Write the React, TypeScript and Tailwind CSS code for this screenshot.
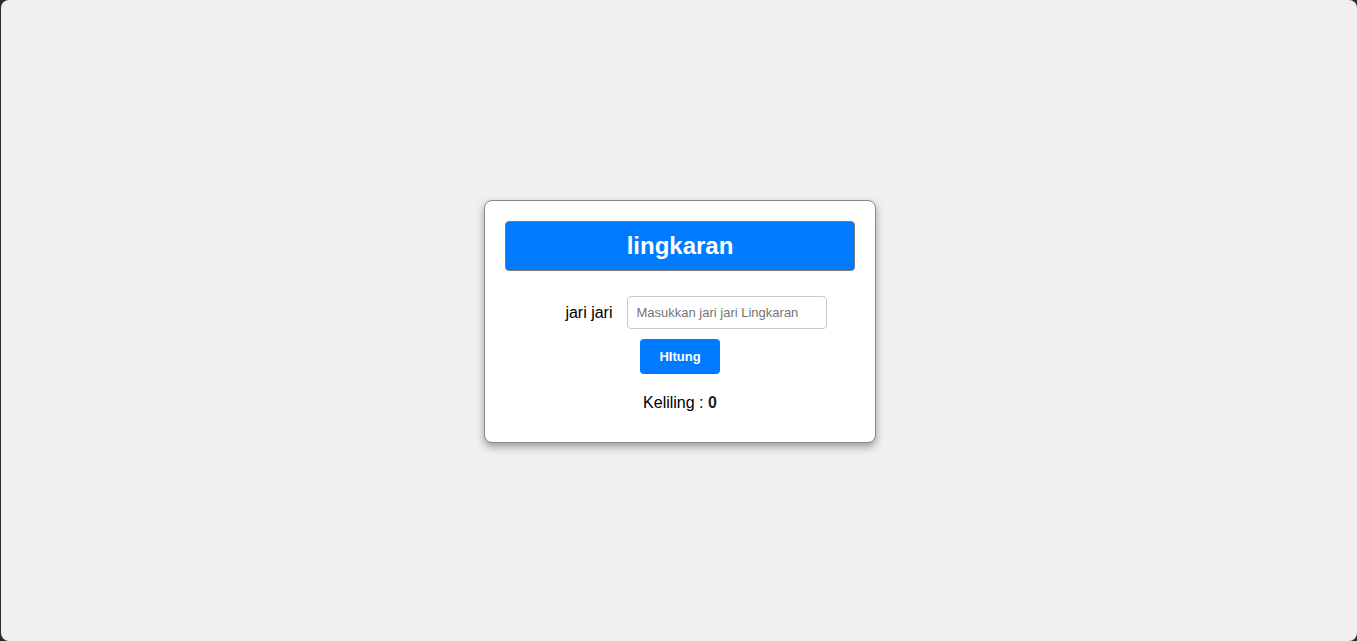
import { useState } from "react";

export default function App() {
  const [jari, setJari] = useState("");
  const [keliling, setKeliling] = useState<number>(0);

  const hitung = () => {
    const r = parseFloat(jari);
    if (!isNaN(r)) setKeliling(2 * Math.PI * r);
  };

  return (
    <div className="h-[641px] w-full bg-[#2b2b2b]">
      <div
        className="ml-px flex h-full items-center justify-center rounded-[8px] bg-[#f0f0f0]"
        style={{ fontFamily: '"Liberation Sans", Arial, sans-serif' }}
      >
        <div className="mt-[2px] ml-[2px] w-[392px] rounded-[8px] border border-[#8a8a8a] bg-white px-[20px] pt-[20px] pb-[27px] shadow-[0_4px_8px_rgba(0,0,0,0.35)]">
          <h2 className="flex h-[50px] items-center justify-center rounded-[4px] border border-[#7a7a7a] bg-[#007bff] text-[24px] font-bold text-white">
            lingkaran
          </h2>

          <div className="mt-[25px] flex justify-center">
            <div className="grid grid-cols-[79px_200px] items-center gap-x-[14px]">
              <label className="text-right text-[16px] text-black">jari jari</label>
              <input
                type="text"
                value={jari}
                onChange={(e) => setJari(e.target.value)}
                placeholder="Masukkan jari jari Lingkaran"
                className="h-[33px] w-[200px] rounded-[4px] border border-[#c8c8c8] px-[9px] text-[13px] outline-none placeholder:text-[#757575]"
              />
            </div>
          </div>

          <div className="mt-[10px] flex justify-center">
            <button
              onClick={hitung}
              className="h-[35px] w-[80px] rounded-[4px] bg-[#007bff] text-[13px] font-semibold text-white"
            >
              HItung
            </button>
          </div>

          <p className="mt-[17px] text-center text-[16px] text-black">
            Keliling : <b className="text-[#222]">{keliling}</b>
          </p>
        </div>
      </div>
    </div>
  );
}
